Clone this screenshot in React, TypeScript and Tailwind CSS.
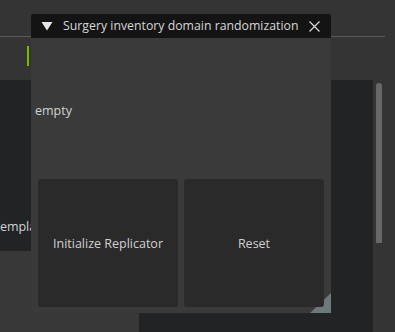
import React from "react";

const font = { fontFamily: '"Open Sans", "Noto Sans", sans-serif' };

const App = () => {
  return (
    <div
      className="relative w-[395px] h-[332px] overflow-hidden bg-[#343434] text-[#d2d2d2]"
      style={font}
    >
      {/* toolbar strip */}
      <div className="h-[37px] w-[385px] border-b border-[#5a5a5a]" />
      <div className="h-[43px] pl-[27px] pt-[9px]">
        <div className="w-[2px] h-[20px] bg-[#76b900]" />
      </div>

      {/* content below */}
      <div className="flex h-[252px]">
        <div className="w-[331px] flex flex-col">
          <div className="h-[171px] bg-[#222325] flex items-end pb-[15px] overflow-hidden">
            <span className="ml-[-7px] text-[12.5px] leading-[18px] whitespace-nowrap">
              Template
            </span>
          </div>
          <div className="h-[62px] bg-[#383838]" />
          <div className="flex-1 flex">
            <div className="w-[139px] bg-[#383838]" />
            <div className="flex-1 bg-[#222325]" />
          </div>
        </div>
        <div className="w-[42px] bg-[#222325]" />
        <div className="w-[22px] pl-[3px] pt-[3px]">
          <div className="w-[6px] h-[160px] rounded-t-[3px] bg-[#686868]" />
        </div>
      </div>

      {/* floating window */}
      <div className="absolute left-[31px] top-[14px] w-[300px] h-[299px] flex flex-col bg-[#3a3a3a] rounded-t-[2px]">
        <div className="h-[24px] flex items-center bg-[#141414] rounded-t-[2px] pl-[10px] pr-[11px]">
          <svg width="12" height="10" viewBox="0 0 12 10">
            <polygon points="0.5,1 11.5,1 6,9.5" fill="#e6e6e6" />
          </svg>
          <span className="ml-[10px] text-[12.3px] text-[#d6d6d6] whitespace-nowrap">
            Surgery inventory domain randomization
          </span>
          <svg className="ml-auto" width="11" height="11" viewBox="0 0 11 11">
            <path d="M0.5 0.5 L10.5 10.5 M10.5 0.5 L0.5 10.5" stroke="#d8d8d8" strokeWidth="1.2" />
          </svg>
        </div>
        <div className="relative flex-1 flex flex-col">
          <div className="h-[141px] pl-[4px] pt-[59px]">
            <span className="text-[12.5px] leading-[18px]">empty</span>
          </div>
          <svg className="absolute right-0 bottom-0" width="21" height="20" viewBox="0 0 21 20">
            <polygon points="21,0 21,20 0,20" fill="#6c7a7b" />
          </svg>
          <div className="relative flex gap-[6px] px-[7px] pb-[6px] flex-1">
            <button className="flex-1 rounded-[3px] bg-[#2a2a2a] text-[12.5px] text-[#d0d0d0] pt-[2px]">
              Initialize Replicator
            </button>
            <button className="flex-1 rounded-[3px] bg-[#2a2a2a] text-[12.5px] text-[#d0d0d0] pt-[2px]">
              Reset
            </button>
          </div>
        </div>
      </div>
    </div>
  );
};

export default App;
